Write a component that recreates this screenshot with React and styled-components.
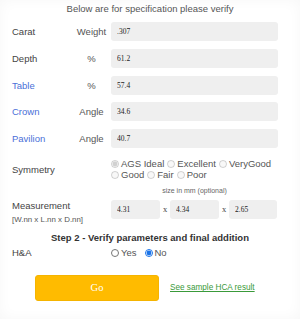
import React from "react";
import styled, { createGlobalStyle } from "styled-components";

const GlobalStyle = createGlobalStyle`
  html, body {
    margin: 0;
    padding: 0;
    background: #ffffff;
  }
  body {
    font-family: "Liberation Sans", Arial, sans-serif;
  }
`;

const Card = styled.div`
  width: 300px;
  height: 319px;
  box-sizing: border-box;
  padding: 3px 0 0 12px;
  background: #fff;
  box-shadow: inset 0 0 14px rgba(0, 0, 0, 0.035);
  display: flex;
  flex-direction: column;
`;

const Title = styled.div`
  font-size: 9.5px;
  line-height: 12px;
  color: #555;
  text-align: center;
  margin: 0 12px 7px 0;
`;

const Row = styled.div`
  display: grid;
  grid-template-columns: 60px 39px 167px;
  align-items: center;
  height: 19px;
  margin-bottom: 7.75px;
`;

const Label = styled.div`
  font-size: 9.5px;
  color: ${(p) => (p.$blue ? "#4a6fd8" : "#444")};
`;

const Unit = styled.div`
  font-size: 9.5px;
  color: #555;
  text-align: center;
`;

const Field = styled.input`
  box-sizing: border-box;
  width: ${(p) => p.$w || "167px"};
  height: 19px;
  border: none;
  border-radius: 3px;
  background: #efefef;
  padding: 0 6px;
  font-family: "Liberation Serif", "Times New Roman", serif;
  font-size: 7.5px;
  color: #222;
  outline: none;
`;

const SymRow = styled.div`
  display: grid;
  grid-template-columns: 99px 167px;
  align-items: center;
  margin: 2px 0 5px;
`;

const Options = styled.div`
  display: flex;
  flex-wrap: wrap;
  column-gap: 3px;
  width: 167px;
  font-size: 9.5px;
  line-height: 11.5px;
  color: #555;
`;

const Opt = styled.label`
  display: inline-flex;
  align-items: center;
  gap: 2px;
  white-space: nowrap;
`;

const Radio = styled.input.attrs({ type: "radio" })`
  width: 8px;
  height: 8px;
  margin: 0;
  accent-color: #1a73e8;
`;

const Hint = styled.div`
  margin: 0 0 5px 99px;
  width: 167px;
  text-align: center;
  font-size: 7px;
  line-height: 9px;
  color: #666;
`;

const MeasureRow = styled.div`
  display: grid;
  grid-template-columns: 99px auto;
  align-items: start;
`;

const MeasureLabel = styled.div`
  font-size: 9.5px;
  line-height: 11px;
  color: #444;
  span {
    display: block;
    font-size: 7.9px;
    line-height: 11px;
    margin-top: 3px;
    color: #555;
  }
`;

const Inputs = styled.div`
  display: flex;
  align-items: center;
`;

const Times = styled.span`
  font-family: "Liberation Serif", "Times New Roman", serif;
  font-size: 8.5px;
  color: #444;
  width: 10px;
  text-align: center;
`;

const Step = styled.div`
  font-size: 9.5px;
  font-weight: bold;
  color: #333;
  text-align: center;
  margin: 7px 12px 3px 0;
  line-height: 12px;
`;

const HaRow = styled.div`
  display: grid;
  grid-template-columns: 99px auto;
  align-items: center;
  font-size: 9.5px;
  color: #444;
  height: 12px;
`;

const HaOpts = styled.div`
  display: flex;
  gap: 8px;
  color: #555;
`;

const Actions = styled.div`
  display: flex;
  align-items: center;
  margin: 16px 0 0 23px;
  gap: 11px;
`;

const GoButton = styled.button`
  width: 124px;
  height: 26px;
  border: 1px solid #f5b400;
  border-radius: 3px;
  background: #ffbb00;
  color: #fff;
  font-family: "Liberation Serif", "Times New Roman", serif;
  font-size: 10.5px;
  cursor: pointer;
`;

const Link = styled.a`
  font-size: 8.2px;
  color: #3a9a3a;
  text-decoration: underline;
`;

const specs = [
  { label: "Carat", unit: "Weight", value: ".307" },
  { label: "Depth", unit: "%", value: "61.2" },
  { label: "Table", unit: "%", value: "57.4", blue: true },
  { label: "Crown", unit: "Angle", value: "34.6", blue: true },
  { label: "Pavilion", unit: "Angle", value: "40.7", blue: true },
];

const symmetry = ["AGS Ideal", "Excellent", "VeryGood", "Good", "Fair", "Poor"];

export default function App() {
  return (
    <>
      <GlobalStyle />
      <Card>
        <Title>Below are for specification please verify</Title>
        {specs.map((s) => (
          <Row key={s.label}>
            <Label $blue={s.blue}>{s.label}</Label>
            <Unit>{s.unit}</Unit>
            <Field defaultValue={s.value} readOnly />
          </Row>
        ))}
        <SymRow>
          <Label>Symmetry</Label>
          <Options>
            {symmetry.map((o, i) => (
              <Opt key={o}>
                <Radio name="sym" disabled defaultChecked={i === 0} />
                {o}
              </Opt>
            ))}
          </Options>
        </SymRow>
        <Hint>size in mm (optional)</Hint>
        <MeasureRow>
          <MeasureLabel>
            Measurement
            <span>[W.nn x L.nn x D.nn]</span>
          </MeasureLabel>
          <Inputs>
            <Field $w="49px" defaultValue="4.31" readOnly />
            <Times>x</Times>
            <Field $w="49px" defaultValue="4.34" readOnly />
            <Times>x</Times>
            <Field $w="48px" defaultValue="2.65" readOnly />
          </Inputs>
        </MeasureRow>
        <Step>Step 2 - Verify parameters and final addition</Step>
        <HaRow>
          <span>H&amp;A</span>
          <HaOpts>
            <Opt>
              <Radio name="ha" />
              Yes
            </Opt>
            <Opt>
              <Radio name="ha" defaultChecked />
              No
            </Opt>
          </HaOpts>
        </HaRow>
        <Actions>
          <GoButton>Go</GoButton>
          <Link href="#">See sample HCA result</Link>
        </Actions>
      </Card>
    </>
  );
}
